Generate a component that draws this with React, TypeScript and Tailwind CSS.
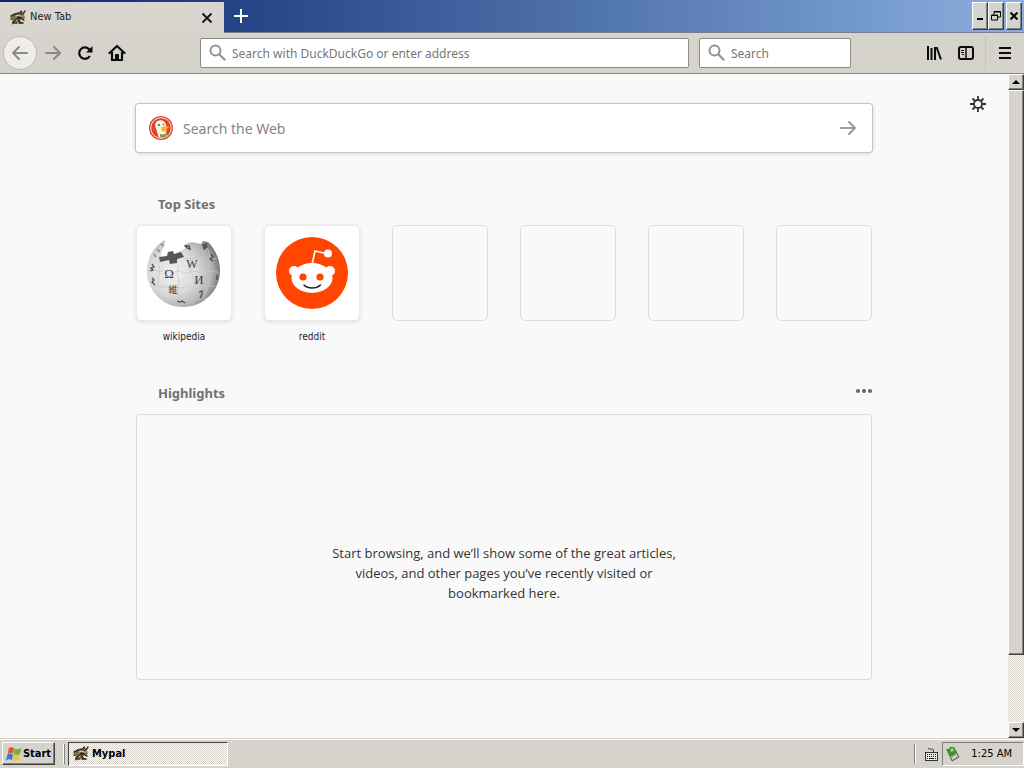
import React from "react";

const raised =
  "bg-[#d6d3cc] border border-t-white border-l-white border-r-[#404040] border-b-[#404040] shadow-[inset_-1px_-1px_0_#808080]";
const dither =
  "bg-[conic-gradient(#ffffff_25%,#d4d0c8_0_50%,#ffffff_0_75%,#d4d0c8_0)] bg-[length:2px_2px]";
const pageFont = "font-['Open_Sans','Noto_Sans',sans-serif]";
const heading = "font-['Noto_Sans',sans-serif] text-[13px] font-bold leading-5 text-[#717171]";
const field =
  "w-full min-w-0 bg-transparent pt-px font-['Noto_Sans',sans-serif] text-[12px] outline-none placeholder:text-[#777]";

function MypalIcon() {
  return (
    <svg width="16" height="16" viewBox="0 0 16 16" fill="none" strokeLinecap="round" strokeLinejoin="round" aria-hidden="true">
      <path d="M1 6l3-2 4-1 3 1 3 1 1 3-3 1-2 1 1 3-2 1-2-2-3 1-2 2 0-3 1-2-3 0z" fill="#75674b" />
      <path d="M1 6l4-2 4-1 3 2M10 3l1-2 1 2M13 4l2-3M3 13l2-3 3-1 2 3M12 9l2 1M4 13h3" stroke="#3a3222" strokeWidth="1.400" />
      <path d="M1 8l4-1M3 10l3-2" stroke="#8c7a58" />
      <path d="M6 6l3-1 2 1M6 11l1-1M12 6h1" stroke="#e3d8b8" />
      <path d="M8 7.500l3 .5M10 13h3" stroke="#1e190f" strokeWidth="1.600" />
    </svg>
  );
}

function Magnifier() {
  return (
    <svg width="18" height="18" viewBox="0 0 18 18" fill="none" stroke="#939393" className="shrink-0" aria-hidden="true">
      <circle cx="6.500" cy="6.500" r="5" strokeWidth="2" />
      <path d="M10.200 10.200l6 6" strokeWidth="2.200" />
    </svg>
  );
}

function Arrow({ flip = false, color = "#8b8985" }: { flip?: boolean; color?: string }) {
  return (
    <svg width="18" height="16" viewBox="0 0 18 16" fill="none" stroke={color} strokeWidth="2" strokeLinecap="round" strokeLinejoin="round" aria-hidden="true">
      {flip ? <path d="M16 8H2M8 2L2 8l6 6" /> : <path d="M2 8h14M10 2l6 6-6 6" />}
    </svg>
  );
}

function DuckIcon() {
  return (
    <svg width="24" height="24" viewBox="0 0 24 24" className="shrink-0" aria-hidden="true">
      <circle cx="12" cy="12" r="12" fill="#d9472b" />
      <circle cx="12" cy="12" r="10.300" fill="none" stroke="#fbe3dc" strokeWidth="1" />
      <path d="M6.500 7c1-3 7-4 9-1 2 2 2 4 1.500 7l.5 7c-3 2-6 2-8 1L7.500 14C6 11 6 9 6.500 7z" fill="#fbf3df" />
      <path d="M12.500 11.500c3-1.500 5-1.500 7.500-.5-1 2-3 2-5 2.500 2 1 3 .7 4 .7-2 2.300-6 1.800-6.500-.2z" fill="#f3b52c" />
      <path d="M11 18l3 .5 3-1v3.500l-3 .5-3-.5z" fill="#77a043" />
      <circle cx="10" cy="9" r="1" fill="#2d4f8e" />
      <circle cx="14.500" cy="8.500" r=".8" fill="#2d4f8e" />
    </svg>
  );
}

function WikipediaLogo() {
  return (
    <svg width="76" height="72" viewBox="0 0 76 72" aria-hidden="true">
      <defs>
        <radialGradient id="globe" cx="36%" cy="48%" r="66%">
          <stop offset="0" stopColor="#f2f2f2" />
          <stop offset="0.500" stopColor="#dadada" />
          <stop offset="0.800" stopColor="#b3b3b3" />
          <stop offset="1" stopColor="#707070" />
        </radialGradient>
      </defs>
      <path d="M19 3C8 9 1 21 1 34c0 20 16 36 36 36s37-16 37-36c0-12-5-22-12-29l-5-1-2 3-5-1-4-1-7 2 1 4-8 4-2 3-15 4 0-6 3-7z" fill="url(#globe)" />
      <path d="M13 20l8-1 1-4 5-1 1 3 7-2 3 5-7 2 0 4-7 1-1-4-9 2z" fill="#565656" />
      <g fill="none" stroke="#c6c6c6" strokeWidth=".7">
        <path d="M13 27c2 12-4 22 2 33M31 28c4 3-2 7 1 12s-3 12 2 28M43 12c5 8-2 16 3 25s-1 20 0 31M60 8c7 13 1 24 3 31s-4 15-5 25" />
        <path d="M2 34c6-5 8 3 14 0s8 4 13 1 8 3 15 0 9 3 15 0 9 1 14 0M6 50c8-4 10 2 17 0s9 3 16 0 8 3 16 0 8 1 14-1M38 21c8 3 12-2 18 1s9-2 15 0" />
      </g>
      <g fill="#3c3c3c" className="font-['Liberation_Serif','Noto_Sans_CJK_JP',serif]" textAnchor="middle">
        <text x="23" y="41" fontSize="13">Ω</text>
        <text x="46" y="31" fontSize="12">W</text>
        <text x="53" y="47" fontSize="13">И</text>
        <text x="27" y="56" fontSize="9">維</text>
      </g>
      <g fill="none" stroke="#4a4a4a" strokeWidth="1.300">
        <path d="M65 17l2 3-3 2 3 2M53 55l3-1 0 3-2 4M39 9l4 0 1 3-3-1zM6 27l2 3-3 1 2 2-3 1M6 41l2 2-2 2 3 3M31 64l3 1 2-1 3 2M71 38l0 5" />
        <path d="M57 8l3-1 1 3-3 2z" fill="#666" />
      </g>
      <path d="M8 17l2 3M11 12l3 3M15 7l3 2" stroke="#888" strokeWidth="1.500" />
    </svg>
  );
}

function RedditLogo() {
  return (
    <svg width="72" height="72" viewBox="0 0 72 72" aria-hidden="true">
      <circle cx="36" cy="36" r="36" fill="#ff4500" />
      <path d="M36 28l3-14 13 3" fill="none" stroke="#fff" strokeWidth="1.600" />
      <circle cx="52" cy="16.500" r="4" fill="#fff" />
      <circle cx="18" cy="34" r="5" fill="#fff" />
      <circle cx="54" cy="34" r="5" fill="#fff" />
      <ellipse cx="36" cy="41" rx="20.500" ry="15" fill="#fff" />
      <circle cx="27" cy="40" r="3.600" fill="#ff4500" />
      <circle cx="44" cy="40" r="3.600" fill="#ff4500" />
      <path d="M28 48c4 4 12 4 16.500 0" fill="none" stroke="#222" strokeWidth="1.600" strokeLinecap="round" />
    </svg>
  );
}

function TitleBar() {
  return (
    <header className="flex h-[33px] shrink-0 border-b border-[#77808f] bg-linear-to-r from-[#0a246a] to-[#8bb0de]">
      <div className="-mb-px mt-0.5 flex w-56 items-center gap-1 bg-[#d9d6d0] pl-[10px] pr-[7px]">
        <MypalIcon />
        <span className="flex-1 text-[11px] text-[#222]">New Tab</span>
        <button aria-label="Close tab" className="flex size-5 items-center justify-center">
          <svg width="12" height="12" viewBox="0 0 12 12" stroke="#111" strokeWidth="1.800"><path d="M1.500 1.500l9 9M10.500 1.500l-9 9" /></svg>
        </button>
      </div>
      <button aria-label="New tab" className="flex w-[34px] items-center justify-center">
        <svg width="14" height="14" viewBox="0 0 14 14" stroke="#fff" strokeWidth="2"><path d="M7 0v14M0 7h14" /></svg>
      </button>
      <div className="ml-auto flex pr-0.5 pt-0.5">
        <button aria-label="Minimize" className={`flex h-7 w-4 items-center justify-center ${raised}`}>
          <svg width="8" height="8" viewBox="0 0 8 8"><path d="M1 6h6v2H1z" /></svg>
        </button>
        <button aria-label="Restore" className={`flex h-7 w-4 items-center justify-center ${raised}`}>
          <svg width="10" height="10" viewBox="0 0 10 10" fill="none" stroke="#000"><path d="M3 3V.5h6.500V6H7M3 1h6.500M.5 4h6v5h-6zM.5 4.500h6" /></svg>
        </button>
        <button aria-label="Close" className={`ml-0.5 flex h-7 w-4 items-center justify-center ${raised}`}>
          <svg width="8" height="8" viewBox="0 0 8 8" stroke="#000" strokeWidth="2"><path d="M.5.5l7 7M7.500.5l-7 7" /></svg>
        </button>
      </div>
    </header>
  );
}

function Toolbar() {
  return (
    <nav className="flex h-[41px] shrink-0 items-center border-b border-[#858380] bg-[#d6d3cc]">
      <button aria-label="Back" className="ml-[3px] flex size-[34px] items-center justify-center rounded-full border border-[#bcb9b4] bg-[#eeece9]">
        <Arrow flip />
      </button>
      <button aria-label="Forward" className="flex w-8 items-center justify-center"><Arrow /></button>
      <button aria-label="Reload" className="flex w-8 items-center justify-center">
        <svg width="16" height="16" viewBox="0 0 16 16" fill="none" stroke="#0c0c0c" strokeWidth="2.200">
          <path d="M12.800 11A5.700 5.700 0 1 1 12.300 4.500" /><path d="M15.500 1v6.500H9z" fill="#0c0c0c" stroke="none" />
        </svg>
      </button>
      <button aria-label="Home" className="flex w-8 items-center justify-center">
        <svg width="18" height="18" viewBox="0 0 18 18" fill="none" stroke="#0c0c0c" strokeWidth="2.200">
          <path d="M1.500 9L9 2l7.500 7" strokeLinecap="round" strokeLinejoin="round" /><path d="M4 8v8h10V8" /><path d="M7.500 16v-5.500h3V16z" fill="#0c0c0c" strokeWidth="1" />
        </svg>
      </button>
      <label className="ml-[67px] flex h-[30px] flex-1 items-center gap-[5px] rounded-xs border border-[#8b8985] bg-white px-2">
        <Magnifier />
        <input aria-label="Address" placeholder="Search with DuckDuckGo or enter address" className={field} />
      </label>
      <label className="ml-2.5 flex h-[30px] w-[152px] items-center gap-[5px] rounded-xs border border-[#8b8985] bg-white px-2">
        <Magnifier />
        <input aria-label="Search" placeholder="Search" className={field} />
      </label>
      <button aria-label="Library" className="ml-[67px] flex w-8 items-center justify-center">
        <svg width="16" height="16" viewBox="0 0 16 16" stroke="#0c0c0c" strokeWidth="2"><path d="M2 1v14M5.500 3v12M9 2v13M10.500 2l4.500 12.500" /></svg>
      </button>
      <button aria-label="Sidebars" className="flex w-8 items-center justify-center">
        <svg width="16" height="14" viewBox="0 0 16 14" fill="none" stroke="#0c0c0c"><rect x="1" y="1" width="14" height="12" rx="2" strokeWidth="2" /><path d="M8 1v12" strokeWidth="1.500" /><path d="M3 4.500h3M3 6.500h3M4 8.500h2" /></svg>
      </button>
      <button aria-label="Open menu" className="ml-[3px] flex h-9 w-[39px] items-center justify-center border-l border-[#c6c3bd]">
        <svg width="12" height="12" viewBox="0 0 12 12" stroke="#0c0c0c" strokeWidth="2"><path d="M0 1h12M0 6h12M0 11h12" /></svg>
      </button>
    </nav>
  );
}

const sites = [
  { name: "wikipedia", logo: <WikipediaLogo /> },
  { name: "reddit", logo: <RedditLogo /> },
];

function NewTabPage() {
  return (
    <main className={`relative min-w-0 flex-1 bg-[#f9f9f9] px-8 pt-[30px] ${pageFont}`}>
      <button aria-label="Customize page" className="absolute right-[22px] top-[22px]">
        <svg width="16" height="16" viewBox="0 0 16 16" fill="none" stroke="#333"><circle cx="8" cy="8" r="4" strokeWidth="1.800" /><path d="M8 0v4M8 12v4M0 8h4M12 8h4M2.500 2.500l2.500 2.500M11 11l2.500 2.500M13.500 2.500L11 5M5 11l-2.500 2.500" strokeWidth="1.800" /></svg>
      </button>
      <div className="mx-auto max-w-[736px]">
        <form className="flex h-12 items-center rounded-[3px] bg-white pl-[13px] pr-[15px] shadow-[0_0_0_1px_#c5c5c5,0_1px_4px_#0003]">
          <DuckIcon />
          <input aria-label="Search the Web" placeholder="Search the Web" className="ml-2.5 min-w-0 flex-1 font-['Noto_Sans',sans-serif] text-[14px] outline-none placeholder:text-[#858585]" />
          <button aria-label="Submit search" type="button"><Arrow color="#999" /></button>
        </form>
        <section>
          <h2 className={`mt-[42px] pl-[22px] ${heading}`}>Top Sites</h2>
          <ul className="mt-[11px] flex justify-between">
            {sites.map((s) => (
              <li key={s.name} className="w-24">
                <a href="#" className="block text-center font-['DejaVu_Sans_Condensed',sans-serif] text-[10px] leading-4 text-[#222]">
                  <span className="mb-2 flex h-24 items-center justify-center rounded-[5px] border border-[#ebebeb] bg-white shadow-[0_1px_4px_#0000001c]">{s.logo}</span>
                  {s.name}
                </a>
              </li>
            ))}
            {[0, 1, 2, 3].map((i) => (
              <li key={i} className="size-24 rounded-[5px] border border-[#dedede]" />
            ))}
          </ul>
        </section>
        <section>
          <div className="mt-[38px] flex items-center justify-between pl-[22px]">
            <h2 className={heading}>Highlights</h2>
            <button aria-label="Section options" className="mb-1">
              <svg width="16" height="4" viewBox="0 0 16 4" fill="#666"><circle cx="2" cy="2" r="2" /><circle cx="8" cy="2" r="2" /><circle cx="14" cy="2" r="2" /></svg>
            </button>
          </div>
          <div className="mt-[11px] flex h-[266px] justify-center rounded-[3px] border border-[#d9d9d9] pt-32">
            <p className="w-[346px] text-center text-[13px] leading-5 text-[#333]">
              Start browsing, and we’ll show some of the great articles, videos, and other pages you’ve recently visited or bookmarked here.
            </p>
          </div>
        </section>
      </div>
    </main>
  );
}

function Scrollbar() {
  return (
    <div className={`flex w-4 shrink-0 flex-col ${dither}`}>
      <button aria-label="Scroll up" className={`flex h-4 items-center justify-center ${raised}`}>
        <svg width="8" height="4" viewBox="0 0 8 4"><path d="M0 4l4-4 4 4z" /></svg>
      </button>
      <div className="flex flex-1 flex-col pb-[67px]"><div className={`flex-1 ${raised}`} /></div>
      <button aria-label="Scroll down" className={`flex h-4 items-center justify-center ${raised}`}>
        <svg width="8" height="4" viewBox="0 0 8 4"><path d="M0 0h8L4 4z" /></svg>
      </button>
    </div>
  );
}

function Taskbar() {
  return (
    <footer className="flex h-[30px] shrink-0 items-center border-t border-[#d4d0c8] bg-[#d6d3cc] pl-0.5 text-[11px] shadow-[inset_0_1px_0_#fff]">
      <button className={`flex h-[23px] w-[53px] items-center justify-center gap-px pt-px font-bold ${raised}`}>
        <svg width="16" height="16" viewBox="0 0 16 16" className="shrink-0" aria-hidden="true">
          <path d="M2.500 2.500c2-2 4-1.500 5.500-.5L7 7.500c-1.500-1-3-1-5 .5z" fill="#e5532d" /><path d="M8.500 2.500c2 1 4 1 7-.5l-1.500 6c-2 1.500-4.500 1-6.500 0z" fill="#78b043" />
          <path d="M1.500 8.500c2-1.500 4-1 5.500 0l-1 5.500c-2-1-3.500-1-6 .5z" fill="#3d76cb" /><path d="M7.500 8.800c2 1 4.500 1 6.500-.3l-1.500 5.500c-2 1.500-4 1-6 .3z" fill="#f3c32e" />
        </svg>
        Start
      </button>
      <span className="ml-2 h-5 w-0.5 border-l border-white bg-[#808080]" />
      <button className={`ml-[3px] flex h-6 w-[160px] items-center gap-[3px] border border-b-white border-l-[#404040] border-r-white border-t-[#404040] pl-1 pt-px font-bold ${dither}`}>
        <MypalIcon />
        Mypal
      </button>
      <span className="ml-auto h-5 w-0.5 border-l border-[#808080] bg-white" />
      <svg width="14" height="16" viewBox="0 0 14 16" className="ml-2 mr-1" aria-hidden="true">
        <path d="M4.500 2c0 2 2 1 3 1s2 0 2 3" fill="none" stroke="#333" /><rect x="1.500" y="6.500" width="12" height="8" fill="#eee" stroke="#333" />
        <path d="M3 8.500h10M3 10.500h10" stroke="#111" strokeDasharray="1 1" /><path d="M3 12.500h1M5 12.500h5M11 12.500h1" stroke="#111" />
      </svg>
      <div className="flex h-6 items-center gap-[10px] border border-b-white border-l-[#808080] border-r-white border-t-[#808080] pl-0.5 pr-[11px]">
        <svg width="16" height="16" viewBox="0 0 16 16" aria-hidden="true">
          <path d="M5 10l6-4 3 5-7 4z" fill="#b5b5b5" stroke="#555" /><path d="M7.500 12.500l4-2.500" stroke="#f4f4f4" /><path d="M1 3l3 0 1-2 4 0 3 5-4 4-4 0-1-3z" fill="#36952d" /><path d="M5 3l3-1 1 3-3 1z" fill="#86dd73" />
        </svg>
        <time className="whitespace-nowrap pt-0.5">1:25 AM</time>
      </div>
    </footer>
  );
}

export default function App() {
  return (
    <div className="flex min-h-screen flex-col bg-[#d6d3cc] font-['DejaVu_Sans_Condensed','DejaVu_Sans',sans-serif] text-black">
      <TitleBar />
      <Toolbar />
      <div className="flex flex-1">
        <NewTabPage />
        <Scrollbar />
      </div>
      <Taskbar />
    </div>
  );
}
